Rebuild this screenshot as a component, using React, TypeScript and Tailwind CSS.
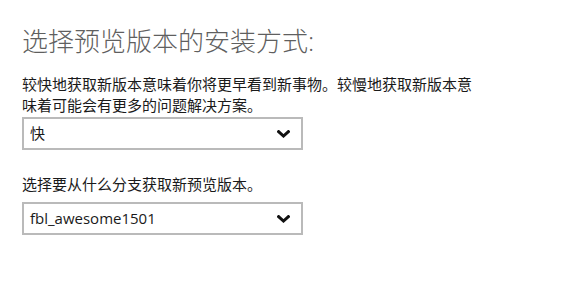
import React from 'react'

const font = { fontFamily: '"Segoe UI", "Open Sans", "Noto Sans CJK SC", sans-serif' }

function Chevron() {
  return (
    <svg width="13" height="8" viewBox="0 0 13 8" className="shrink-0">
      <path d="M1.6 1.6 L6.5 6 L11.4 1.6" fill="none" stroke="#111" strokeWidth="3" strokeLinecap="square" />
    </svg>
  )
}

function Dropdown({ value }: { value: string }) {
  return (
    <div className="w-[281px] h-[33px] border-2 border-[#bababa] bg-white flex items-center justify-between pl-[6px] pr-[11px]">
      <span className="text-[15px] text-[#1a1a1a] leading-none">{value}</span>
      <Chevron />
    </div>
  )
}

export default function App() {
  return (
    <div className="w-[579px] h-[308px] bg-white pl-[22px] pt-[24px]" style={font}>
      <h1 className="text-[26px] leading-[34px] text-[#5f5f5f] font-light">选择预览版本的安装方式:</h1>
      <p className="mt-[16px] w-[458px] text-[15px] leading-[21px] text-[#1a1a1a]">
        较快地获取新版本意味着你将更早看到新事物。较慢地获取新版本意味着可能会有更多的问题解决方案。
      </p>
      <div className="mt-[1px]">
        <Dropdown value="快" />
      </div>
      <p className="mt-[24px] text-[15px] leading-[21px] text-[#1a1a1a]">选择要从什么分支获取新预览版本。</p>
      <div className="mt-[7px]">
        <Dropdown value="fbl_awesome1501" />
      </div>
    </div>
  )
}
